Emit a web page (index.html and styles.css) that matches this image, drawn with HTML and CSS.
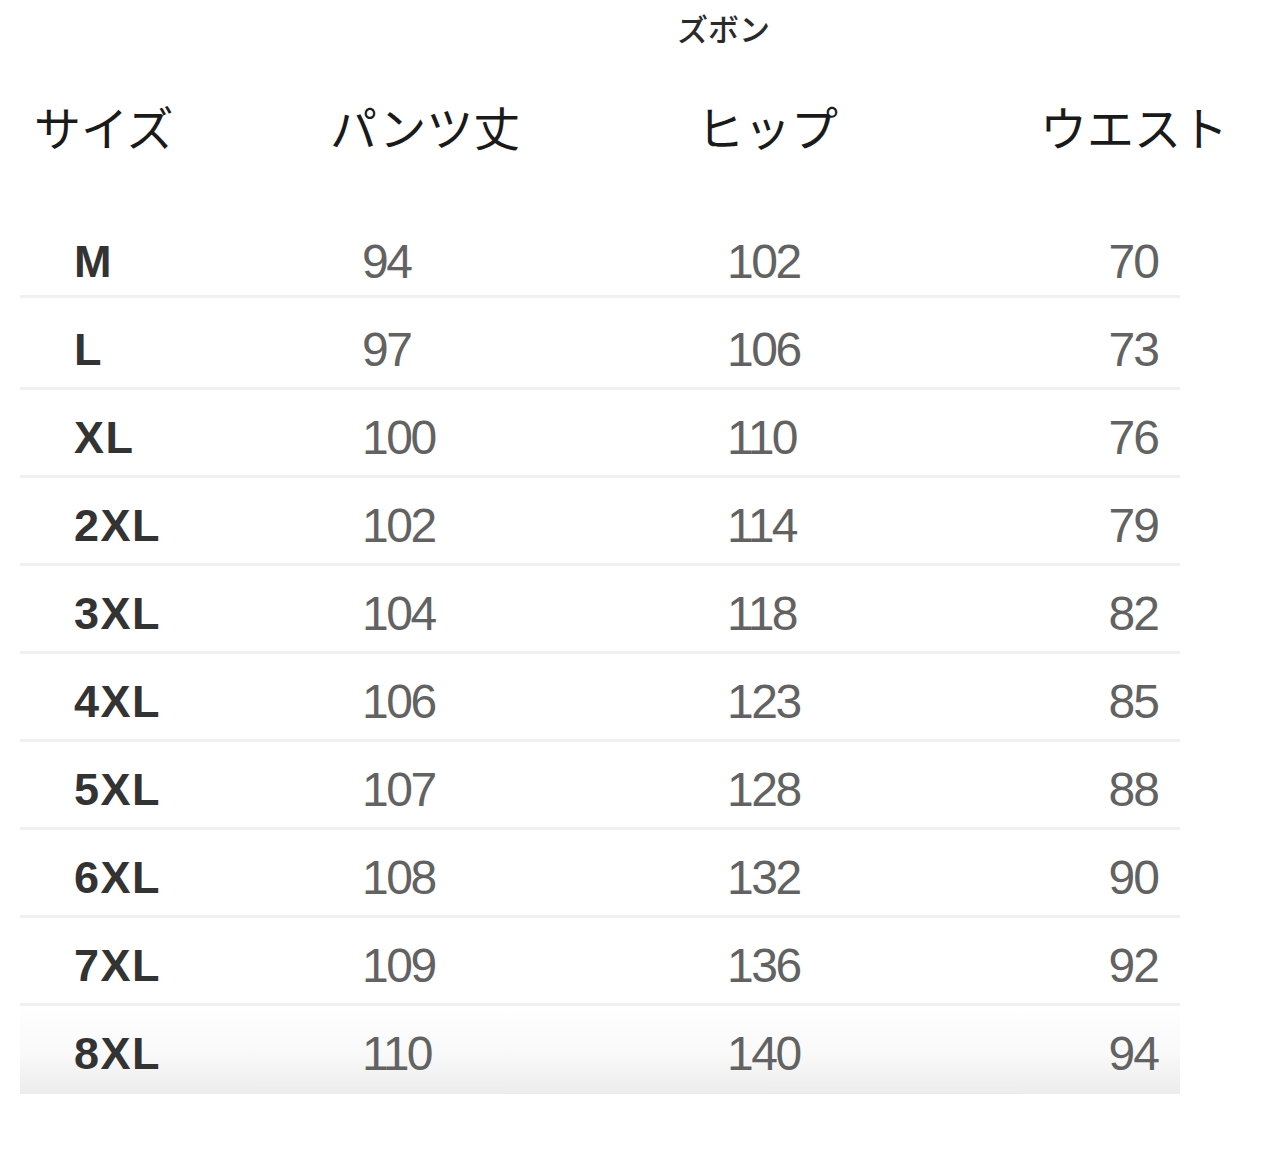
FILE: index.html
```html
<!DOCTYPE html>
<html lang="ja">
<head>
<meta charset="utf-8">
<link rel="stylesheet" href="styles.css">
</head>
<body>
<div class="title">ズボン</div>
<div class="head">
  <div>サイズ</div>
  <div>パンツ丈</div>
  <div>ヒップ</div>
  <div>ウエスト</div>
</div>
<div class="table">
  <div class="row"><span class="size">M</span><span class="num">94</span><span class="num">102</span><span class="num right">70</span></div>
  <div class="row"><span class="size">L</span><span class="num">97</span><span class="num">106</span><span class="num right">73</span></div>
  <div class="row"><span class="size">XL</span><span class="num">100</span><span class="num">110</span><span class="num right">76</span></div>
  <div class="row"><span class="size">2XL</span><span class="num">102</span><span class="num">114</span><span class="num right">79</span></div>
  <div class="row"><span class="size">3XL</span><span class="num">104</span><span class="num">118</span><span class="num right">82</span></div>
  <div class="row"><span class="size">4XL</span><span class="num">106</span><span class="num">123</span><span class="num right">85</span></div>
  <div class="row"><span class="size">5XL</span><span class="num">107</span><span class="num">128</span><span class="num right">88</span></div>
  <div class="row"><span class="size">6XL</span><span class="num">108</span><span class="num">132</span><span class="num right">90</span></div>
  <div class="row"><span class="size">7XL</span><span class="num">109</span><span class="num">136</span><span class="num right">92</span></div>
  <div class="row last"><span class="size">8XL</span><span class="num">110</span><span class="num">140</span><span class="num right">94</span></div>
</div>
</body>
</html>
```
FILE: styles.css
```css
html, body {
  margin: 0;
  padding: 0;
  background: #ffffff;
}
body {
  width: 1280px;
  height: 1160px;
  font-family: "Liberation Sans", Arial, "Noto Sans CJK JP", sans-serif;
  color: #222;
}
.title {
  margin-top: 7px;
  padding-left: 677px;
  height: 42px;
  line-height: 42px;
  font-family: "Noto Sans CJK JP", sans-serif;
  font-size: 31px;
  font-weight: 500;
  color: #2a2a2a;
}
.head {
  margin-top: 47px;
  padding-left: 34px;
  display: grid;
  grid-template-columns: 296px 367px 343px auto;
  height: 60px;
  line-height: 60px;
  font-family: "Noto Sans CJK JP", sans-serif;
  font-size: 47px;
  font-weight: 400;
  color: #1a1a1a;
}
.table {
  margin-top: 58px;
  margin-left: 20px;
  width: 1160px;
}
.row {
  box-sizing: border-box;
  height: 88px;
  padding: 10px 22px 0 54px;
  border-bottom: 3px solid #f0f0f0;
  display: grid;
  grid-template-columns: 288px 365px 1fr auto;
  line-height: 75px;
}
.row:first-child {
  height: 84px;
  padding-top: 10px;
}
.row:nth-child(2) {
  height: 92px;
  padding-top: 14px;
}
.row.last {
  border-bottom: none;
  background: linear-gradient(to bottom, #ffffff 0%, #f9f9f9 55%, #ececec 100%);
}
.size {
  font-family: "Liberation Sans", Arial, sans-serif;
  font-weight: 700;
  font-size: 45px;
  letter-spacing: 1.5px;
  color: #333;
}
.num {
  font-family: "Liberation Sans", Arial, sans-serif;
  font-size: 48px;
  letter-spacing: -2.5px;
  color: #626262;
}
.num.right {
  text-align: right;
  letter-spacing: -2px;
}
```
